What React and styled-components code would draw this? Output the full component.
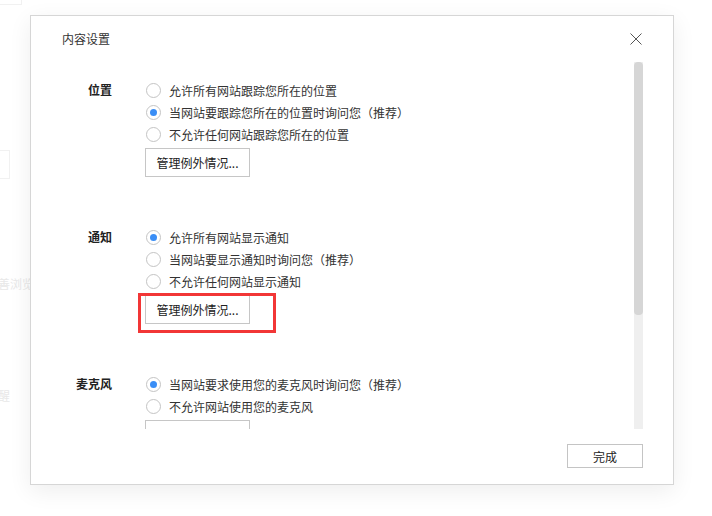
import React from "react";
import styled, { createGlobalStyle } from "styled-components";

const Global = createGlobalStyle`
  html, body { margin: 0; padding: 0; background: #fff; }
  body { font-family: "Noto Sans CJK SC", "Microsoft YaHei", sans-serif; }
  * { box-sizing: border-box; }
`;

const Page = styled.div`
  position: relative;
  width: 712px;
  height: 516px;
  overflow: hidden;
  background: #fff;
`;

const BgColumn = styled.div`
  display: flex;
  flex-direction: column;
  align-items: flex-start;
`;

const BgBox = styled.div`
  width: ${(p) => p.$w}px;
  height: ${(p) => p.$h}px;
  margin-top: ${(p) => p.$mt}px;
  border: 1px solid #f1f1f1;
  border-left: none;
`;

const BgText = styled.div`
  margin-top: ${(p) => p.$mt}px;
  margin-left: -2px;
  font-size: 12px;
  line-height: 16px;
  color: #e8e8e8;
  white-space: nowrap;
`;

const Dialog = styled.div`
  position: absolute;
  left: 30px;
  top: 15px;
  width: 644px;
  height: 470px;
  background: #fff;
  border: 1px solid #d6d6d6;
  box-shadow: 0 6px 22px rgba(0, 0, 0, 0.07);
  display: flex;
  flex-direction: column;
`;

const Header = styled.div`
  height: 46px;
  flex: none;
  display: flex;
  align-items: center;
  justify-content: space-between;
  padding: 0 31px 1px 31px;
`;

const Title = styled.div`
  font-size: 12px;
  color: #333;
`;

const CloseButton = styled.button`
  border: none;
  background: none;
  padding: 0;
  width: 12px;
  height: 12px;
  display: flex;
  cursor: pointer;
`;

const Body = styled.div`
  height: 367px;
  flex: none;
  display: flex;
  padding-right: 30px;
`;

const Content = styled.div`
  flex: 1;
  overflow: hidden;
  padding: 17px 0 0 31px;
`;

const Scrollbar = styled.div`
  width: 9px;
  flex: none;
  background: #efefef;
`;

const Thumb = styled.div`
  height: 253px;
  background: #d6d6d6;
  border-radius: 4px;
`;

const Section = styled.div`
  display: grid;
  grid-template-columns: 50px 1fr;
  column-gap: 34px;
  margin-bottom: 49px;
`;

const Label = styled.div`
  text-align: right;
  font-size: 12px;
  font-weight: bold;
  line-height: 22px;
  color: #222;
`;

const Options = styled.div`
  display: flex;
  flex-direction: column;
  align-items: flex-start;
`;

const Option = styled.label`
  height: 22px;
  display: flex;
  align-items: center;
  gap: 8px;
  font-size: 12px;
  color: #333;
  white-space: nowrap;
`;

const Radio = styled.span`
  width: 15px;
  height: 15px;
  border-radius: 50%;
  border: 1px solid #c4c4c4;
  background: #fff;
  display: flex;
  align-items: center;
  justify-content: center;
  flex: none;
  &::after {
    content: "";
    width: 7px;
    height: 7px;
    border-radius: 50%;
    background: ${(p) => (p.$checked ? "#3a8ef6" : "transparent")};
  }
`;

const ButtonWrap = styled.div`
  position: relative;
  margin-top: 3px;
  margin-left: -1px;
`;

const Button = styled.button`
  width: 105px;
  height: 29px;
  border: 1px solid #c6c6c6;
  background: #fff;
  font-family: inherit;
  font-size: 12px;
  color: #222;
  padding: 0;
  cursor: pointer;
`;

const Highlight = styled.div`
  position: absolute;
  left: -7px;
  top: -2px;
  right: -26px;
  bottom: -9px;
  border: 3px solid #f23636;
  pointer-events: none;
`;

const Footer = styled.div`
  display: flex;
  justify-content: flex-end;
  padding: 15px 30px 0 0;
`;

const DoneButton = styled.button`
  width: 76px;
  height: 24px;
  border: 1px solid #c4c4c4;
  background: #fff;
  font-family: inherit;
  font-size: 12px;
  color: #222;
  padding: 0;
  cursor: pointer;
`;

const sections = [
  {
    label: "位置",
    options: [
      "允许所有网站跟踪您所在的位置",
      "当网站要跟踪您所在的位置时询问您（推荐）",
      "不允许任何网站跟踪您所在的位置",
    ],
    checked: 1,
  },
  {
    label: "通知",
    options: [
      "允许所有网站显示通知",
      "当网站要显示通知时询问您（推荐）",
      "不允许任何网站显示通知",
    ],
    checked: 0,
    highlight: true,
  },
  {
    label: "麦克风",
    options: ["当网站要求使用您的麦克风时询问您（推荐）", "不允许网站使用您的麦克风"],
    checked: 0,
  },
];

export default function App() {
  return (
    <Page>
      <Global />
      <BgColumn>
        <BgBox $w={22} $h={22} $mt={-17} />
        <BgBox $w={10} $h={29} $mt={145} />
        <BgText $mt={97}>善浏览</BgText>
        <BgText $mt={96}>醒</BgText>
      </BgColumn>
      <Dialog>
        <Header>
          <Title>内容设置</Title>
          <CloseButton aria-label="关闭">
            <svg width="12" height="12" viewBox="0 0 12 12">
              <path d="M0.5 0.5 L11.5 11.5 M11.5 0.5 L0.5 11.5" stroke="#555" strokeWidth="1" fill="none" />
            </svg>
          </CloseButton>
        </Header>
        <Body>
          <Content>
            {sections.map((s) => (
              <Section key={s.label}>
                <Label>{s.label}</Label>
                <Options>
                  {s.options.map((o, i) => (
                    <Option key={o}>
                      <Radio $checked={i === s.checked} />
                      {o}
                    </Option>
                  ))}
                  <ButtonWrap>
                    <Button>管理例外情况...</Button>
                    {s.highlight && <Highlight />}
                  </ButtonWrap>
                </Options>
              </Section>
            ))}
          </Content>
          <Scrollbar>
            <Thumb />
          </Scrollbar>
        </Body>
        <Footer>
          <DoneButton>完成</DoneButton>
        </Footer>
      </Dialog>
    </Page>
  );
}
